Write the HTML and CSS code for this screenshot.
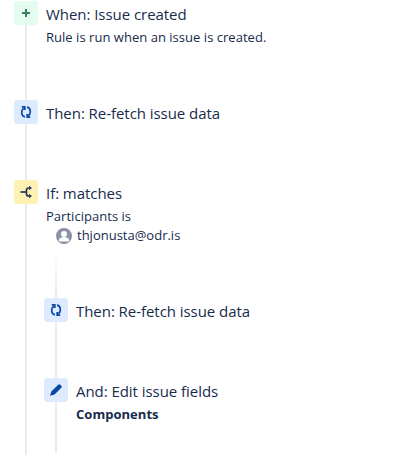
FILE: index.html
```html
<!DOCTYPE html>
<html lang="en">
<head>
<meta charset="utf-8">
<title>Automation rule</title>
<link rel="stylesheet" href="styles.css">
</head>
<body>
<main class="rule">
  <section class="step step-when">
    <span class="icon icon-green">
      <svg viewBox="0 0 24 24" width="24" height="24"><path d="M11 8h2v3h3v2h-3v3h-2v-3H8v-2h3z" fill="#36805f"/></svg>
    </span>
    <div class="body">
      <h2 class="title">When: Issue created</h2>
      <p class="desc">Rule is run when an issue is created.</p>
    </div>
  </section>
  <section class="step step-then">
    <span class="icon icon-blue">
      <svg viewBox="0 0 24 24" width="24" height="24"><g fill="none" stroke="#0747a6" stroke-width="1.700"><path d="M11 16.800C8.800 16.400 7.700 14.600 7.700 12.300c0-1.800.7-3.200 2.100-4"/><path d="M7.800 6.900h3v3"/><path d="M13 7.200c2.200.4 3.300 2.200 3.300 4.500 0 1.800-.7 3.200-2.100 4"/><path d="M16.200 17.100h-3v-3"/></g></svg>
    </span>
    <div class="body"><h2 class="title">Then: Re-fetch issue data</h2></div>
  </section>
  <section class="step step-if">
    <span class="icon icon-yellow">
      <svg viewBox="0 0 24 24" width="24" height="24"><g fill="none" stroke="#253858" stroke-width="1.700"><path d="M6.500 12H12"/><path d="M16 8h-1.500a2 2 0 0 0-2 2v4a2 2 0 0 0 2 2H16"/></g><path d="M15 5.700l3 2.300-3 2.300zM15 13.700l3 2.300-3 2.300z" fill="#253858"/></svg>
    </span>
    <div class="body">
      <h2 class="title">If: matches</h2>
      <p class="desc">Participants is</p>
      <div class="user">
        <svg class="avatar" viewBox="0 0 16 16" width="16" height="16"><circle cx="8" cy="8" r="8" fill="#8993a4"/><circle cx="8" cy="6" r="3" fill="#fff"/><path d="M2.800 12.500c0-2.200 2.200-3.400 5.200-3.400s5.200 1.200 5.200 3.400v1H2.800z" fill="#fff"/><path d="M0 8a8 8 0 0 0 16 0v6H0z" fill="none"/></svg>
        <span>thjonusta@odr.is</span>
      </div>
    </div>
  </section>
  <div class="branch">
    <section class="step step-nested">
      <span class="icon icon-blue">
        <svg viewBox="0 0 24 24" width="24" height="24"><g fill="none" stroke="#0747a6" stroke-width="1.700"><path d="M11 16.800C8.800 16.400 7.700 14.600 7.700 12.300c0-1.800.7-3.200 2.100-4"/><path d="M7.800 6.900h3v3"/><path d="M13 7.200c2.200.4 3.300 2.200 3.300 4.500 0 1.800-.7 3.200-2.100 4"/><path d="M16.200 17.100h-3v-3"/></g></svg>
      </span>
      <div class="body"><h2 class="title">Then: Re-fetch issue data</h2></div>
    </section>
    <section class="step">
      <span class="icon icon-blue">
        <svg viewBox="0 0 24 24" width="24" height="24"><path d="M14.200 6.700a1.500 1.500 0 0 1 2.100 0l1 1a1.500 1.500 0 0 1 0 2.100l-6.700 6.700-4.600 1.300 1.300-4.400z" fill="#0747a6"/></svg>
      </span>
      <div class="body">
        <h2 class="title">And: Edit issue fields</h2>
        <p class="desc strong">Components</p>
      </div>
    </section>
  </div>
</main>
</body>
</html>
```
FILE: styles.css
```css
html, body {
  margin: 0;
  padding: 0;
  height: 100%;
  overflow: hidden;
  background: #fff;
}
body {
  font-family: "Open Sans", "Noto Sans", "Liberation Sans", sans-serif;
  color: #172b4d;
}
.rule {
  position: relative;
  padding: 1px 0 0 14px;
  height: 454px;
}
.rule::before {
  content: "";
  position: absolute;
  left: 25px;
  top: 1px;
  bottom: 0;
  width: 2px;
  background: #ebecf0;
}
.branch {
  position: relative;
  margin-left: 30px;
}
.branch::before {
  content: "";
  position: absolute;
  left: 11px;
  top: -45px;
  height: 200px;
  width: 2px;
  background: linear-gradient(to bottom, #fff 0, #ebecf0 35px);
}
.step {
  position: relative;
  display: flex;
  gap: 8px;
  align-items: flex-start;
}
.step-when { height: 99px; }
.step-then { height: 80px; }
.step-if { height: 118px; }
.step-nested { height: 80px; }
.icon {
  flex: none;
  width: 24px;
  height: 24px;
  border-radius: 3px;
  display: flex;
}
.icon-green { background: #e3fcef; }
.icon-blue { background: #deebff; }
.icon-yellow { background: #fff0b3; }
.body { min-width: 0; }
.title {
  margin: 0;
  padding-top: 3px;
  font-size: 15px;
  line-height: 21px;
  font-weight: 400;
  letter-spacing: -0.05px;
  white-space: nowrap;
}
.desc {
  margin: 4px 0 0;
  font-size: 13px;
  line-height: 17px;
  letter-spacing: 0.03px;
  white-space: nowrap;
}
.strong { font-weight: 700; }
.user {
  display: flex;
  align-items: center;
  gap: 5px;
  margin: 1px 0 0 10px;
  font-size: 13px;
  line-height: 19px;
  white-space: nowrap;
}
.avatar { flex: none; }
```
